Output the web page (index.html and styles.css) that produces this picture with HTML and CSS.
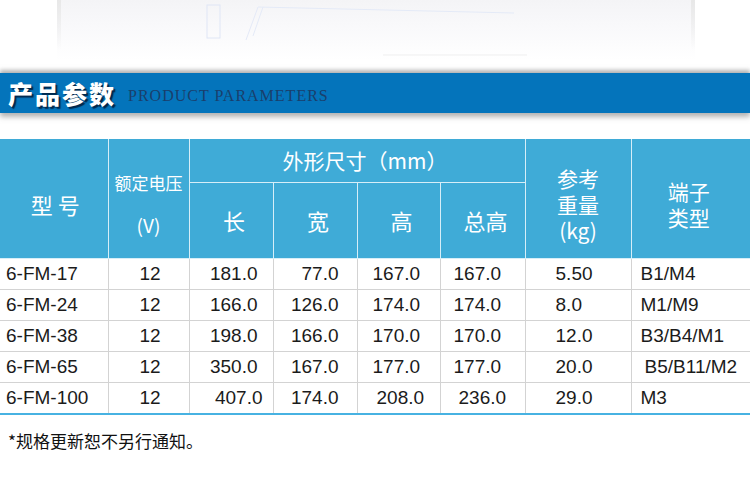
FILE: index.html
```html
<!DOCTYPE html>
<html lang="zh-CN">
<head>
<meta charset="utf-8">
<title>产品参数</title>
<link rel="stylesheet" href="styles.css">
</head>
<body>
<div class="hero">
  <div class="photo">
    <svg class="photo-lines" width="638" height="60" viewBox="0 0 638 60">
      <rect x="150" y="5" width="13" height="33" fill="none" stroke="#dfe6f6" stroke-width="1"/>
      <path d="M201 7 L457 13 M201 7 L189 40 M206 7 L196 36" fill="none" stroke="#e4eaf7" stroke-width="1"/>
      <path d="M326 55 L470 55" fill="none" stroke="#efefef" stroke-width="1"/>
    </svg>
  </div>
</div>
<div class="banner">
  <h1 class="banner-title">产品参数</h1>
  <span class="banner-sub">PRODUCT PARAMETERS</span>
</div>
<table class="spec">
  <colgroup>
    <col class="c1"><col class="c2"><col class="c3"><col class="c4"><col class="c5"><col class="c6"><col class="c7"><col class="c8">
  </colgroup>
  <thead>
    <tr class="h1">
      <th rowspan="2" class="tall model">型号</th>
      <th rowspan="2" class="tall volt"><span class="vl1">额定电压</span><span class="vl2">(V)</span></th>
      <th colspan="4" class="dims">外形尺寸（mm）</th>
      <th rowspan="2" class="tall stack"><span class="ln">参考</span><span class="ln">重量</span><span class="ln">(kg)</span></th>
      <th rowspan="2" class="tall stack term"><span class="ln">端子</span><span class="ln">类型</span></th>
    </tr>
    <tr class="h2">
      <th class="sub">长</th>
      <th class="sub">宽</th>
      <th class="sub">高</th>
      <th class="sub">总高</th>
    </tr>
  </thead>
  <tbody>
    <tr><td class="d1">6-FM-17</td><td class="d2">12</td><td class="d3">181.0</td><td class="d4">77.0</td><td class="d5">167.0</td><td class="d6">167.0</td><td class="d7">5.50</td><td class="d8">B1/M4</td></tr>
    <tr><td class="d1">6-FM-24</td><td class="d2">12</td><td class="d3">166.0</td><td class="d4">126.0</td><td class="d5">174.0</td><td class="d6">174.0</td><td class="d7">8.0</td><td class="d8">M1/M9</td></tr>
    <tr><td class="d1">6-FM-38</td><td class="d2">12</td><td class="d3">198.0</td><td class="d4">166.0</td><td class="d5">170.0</td><td class="d6">170.0</td><td class="d7">12.0</td><td class="d8">B3/B4/M1</td></tr>
    <tr><td class="d1">6-FM-65</td><td class="d2">12</td><td class="d3">350.0</td><td class="d4">167.0</td><td class="d5">177.0</td><td class="d6">177.0</td><td class="d7">20.0</td><td class="d8 wide">B5/B11/M2</td></tr>
    <tr class="last"><td class="d1">6-FM-100</td><td class="d2">12</td><td class="d3 shift">407.0</td><td class="d4">174.0</td><td class="d5 shift">208.0</td><td class="d6 shift">236.0</td><td class="d7">29.0</td><td class="d8">M3</td></tr>
  </tbody>
</table>
<p class="note">*规格更新恕不另行通知。</p>
</body>
</html>
```
FILE: styles.css
```css
html, body {
  margin: 0;
  padding: 0;
  background: #ffffff;
}

body {
  width: 750px;
  font-family: "Liberation Sans", Arial, "Noto Sans CJK SC", sans-serif;
  overflow: hidden;
}

.hero {
  height: 66px;
  position: relative;
}

.photo {
  margin-left: 57px;
  width: 638px;
  height: 60px;
  background: linear-gradient(to bottom, #f4f4f6 0%, #f9f9fb 45%, #ffffff 100%);
  position: relative;
}

.photo::before,
.photo::after {
  content: "";
  position: absolute;
  top: 0;
  width: 4px;
  height: 50px;
  background: linear-gradient(to bottom, #e8e8e8, rgba(255, 255, 255, 0));
}

.photo::before { left: 0; }
.photo::after { right: 0; }

.photo-lines {
  position: absolute;
  left: 0;
  top: 0;
  display: block;
}

.banner {
  height: 40px;
  margin-top: 7px;
  background: #0474bb;
  box-shadow: 0 -3px 4px rgba(120, 120, 120, 0.55), 0 4px 5px rgba(110, 110, 110, 0.5);
  display: flex;
  align-items: center;
  padding-left: 8px;
  position: relative;
}

.banner-title {
  margin: 0;
  font-family: "Noto Sans CJK SC", sans-serif;
  font-size: 25px;
  font-weight: 900;
  letter-spacing: 2px;
  color: #ffffff;
  line-height: 40px;
  text-shadow: 2px 2px 1px #00284d;
}

.banner-sub {
  margin-left: 12px;
  margin-top: 6px;
  font-family: "Liberation Serif", "Times New Roman", serif;
  font-size: 16px;
  letter-spacing: 1px;
  color: #1a3f6c;
}

.spec {
  margin-top: 26px;
  width: 750px;
  border-collapse: collapse;
  table-layout: fixed;
}

.c1 { width: 108px; }
.c2 { width: 81px; }
.c3 { width: 84px; }
.c4 { width: 84px; }
.c5 { width: 83px; }
.c6 { width: 85px; }
.c7 { width: 106px; }
.c8 { width: 119px; }

.spec th {
  background: #3fabd7;
  color: #ffffff;
  font-family: "Noto Sans CJK SC", sans-serif;
  font-weight: 400;
  font-size: 21px;
  border: 1px solid #d6eef8;
  padding: 0;
  text-align: center;
  vertical-align: middle;
}

.spec th:first-child { border-left: none; }
.spec th:last-child { border-right: none; }
.spec tr.h1 th { border-top: none; }

.h1 { height: 43px; }
.h2 { height: 76px; }

.spec th.tall {
  padding-top: 12px;
}

.spec th.model {
  letter-spacing: 5px;
  padding-left: 8px;
  font-size: 22px;
}

.spec th.volt {
  font-size: 17px;
  white-space: nowrap;
}

.vl1, .vl2 {
  display: block;
}

.vl1 {
  line-height: 22px;
}

.vl2 {
  margin-top: 20px;
  font-size: 19px;
  line-height: 22px;
}

.spec th.dims {
  padding-left: 16px;
  font-size: 21px;
}

.spec th.sub {
  padding-left: 6px;
  font-size: 22px;
}

.spec th.stack {
  font-size: 21px;
}

.ln {
  display: block;
  line-height: 26px;
}

.spec th.term {
  padding-right: 4px;
}

.spec td {
  height: 30px;
  padding: 0;
  border: 1px solid #d3d3d3;
  font-size: 19px;
  color: #1b1b1b;
  vertical-align: middle;
  white-space: nowrap;
}

.spec td:first-child { border-left: none; }
.spec td:last-child { border-right: none; }

.spec tbody tr:first-child td { border-top: none; }

.spec tr.last td {
  border-bottom: 2px solid #47b2e2;
}

.spec td.d1 { padding-left: 6px; }
.spec td.d2 { text-align: center; padding-left: 3px; }
.spec td.d3 { text-align: right; padding-right: 15px; }
.spec td.d4 { text-align: right; padding-right: 18px; }
.spec td.d5 { padding-left: 15px; }
.spec td.d6 { padding-left: 13px; }
.spec td.d7 { padding-left: 30px; }
.spec td.d8 { padding-left: 9px; }
.spec td.d8.wide { padding-left: 13px; }

.spec td.d3.shift { padding-right: 10px; }
.spec td.d5.shift { padding-left: 19px; }
.spec td.d6.shift { padding-left: 18px; }

.note {
  margin: 14px 0 0 8px;
  font-family: "Noto Sans CJK SC", sans-serif;
  font-size: 17px;
  color: #111111;
  line-height: 24px;
}
```
